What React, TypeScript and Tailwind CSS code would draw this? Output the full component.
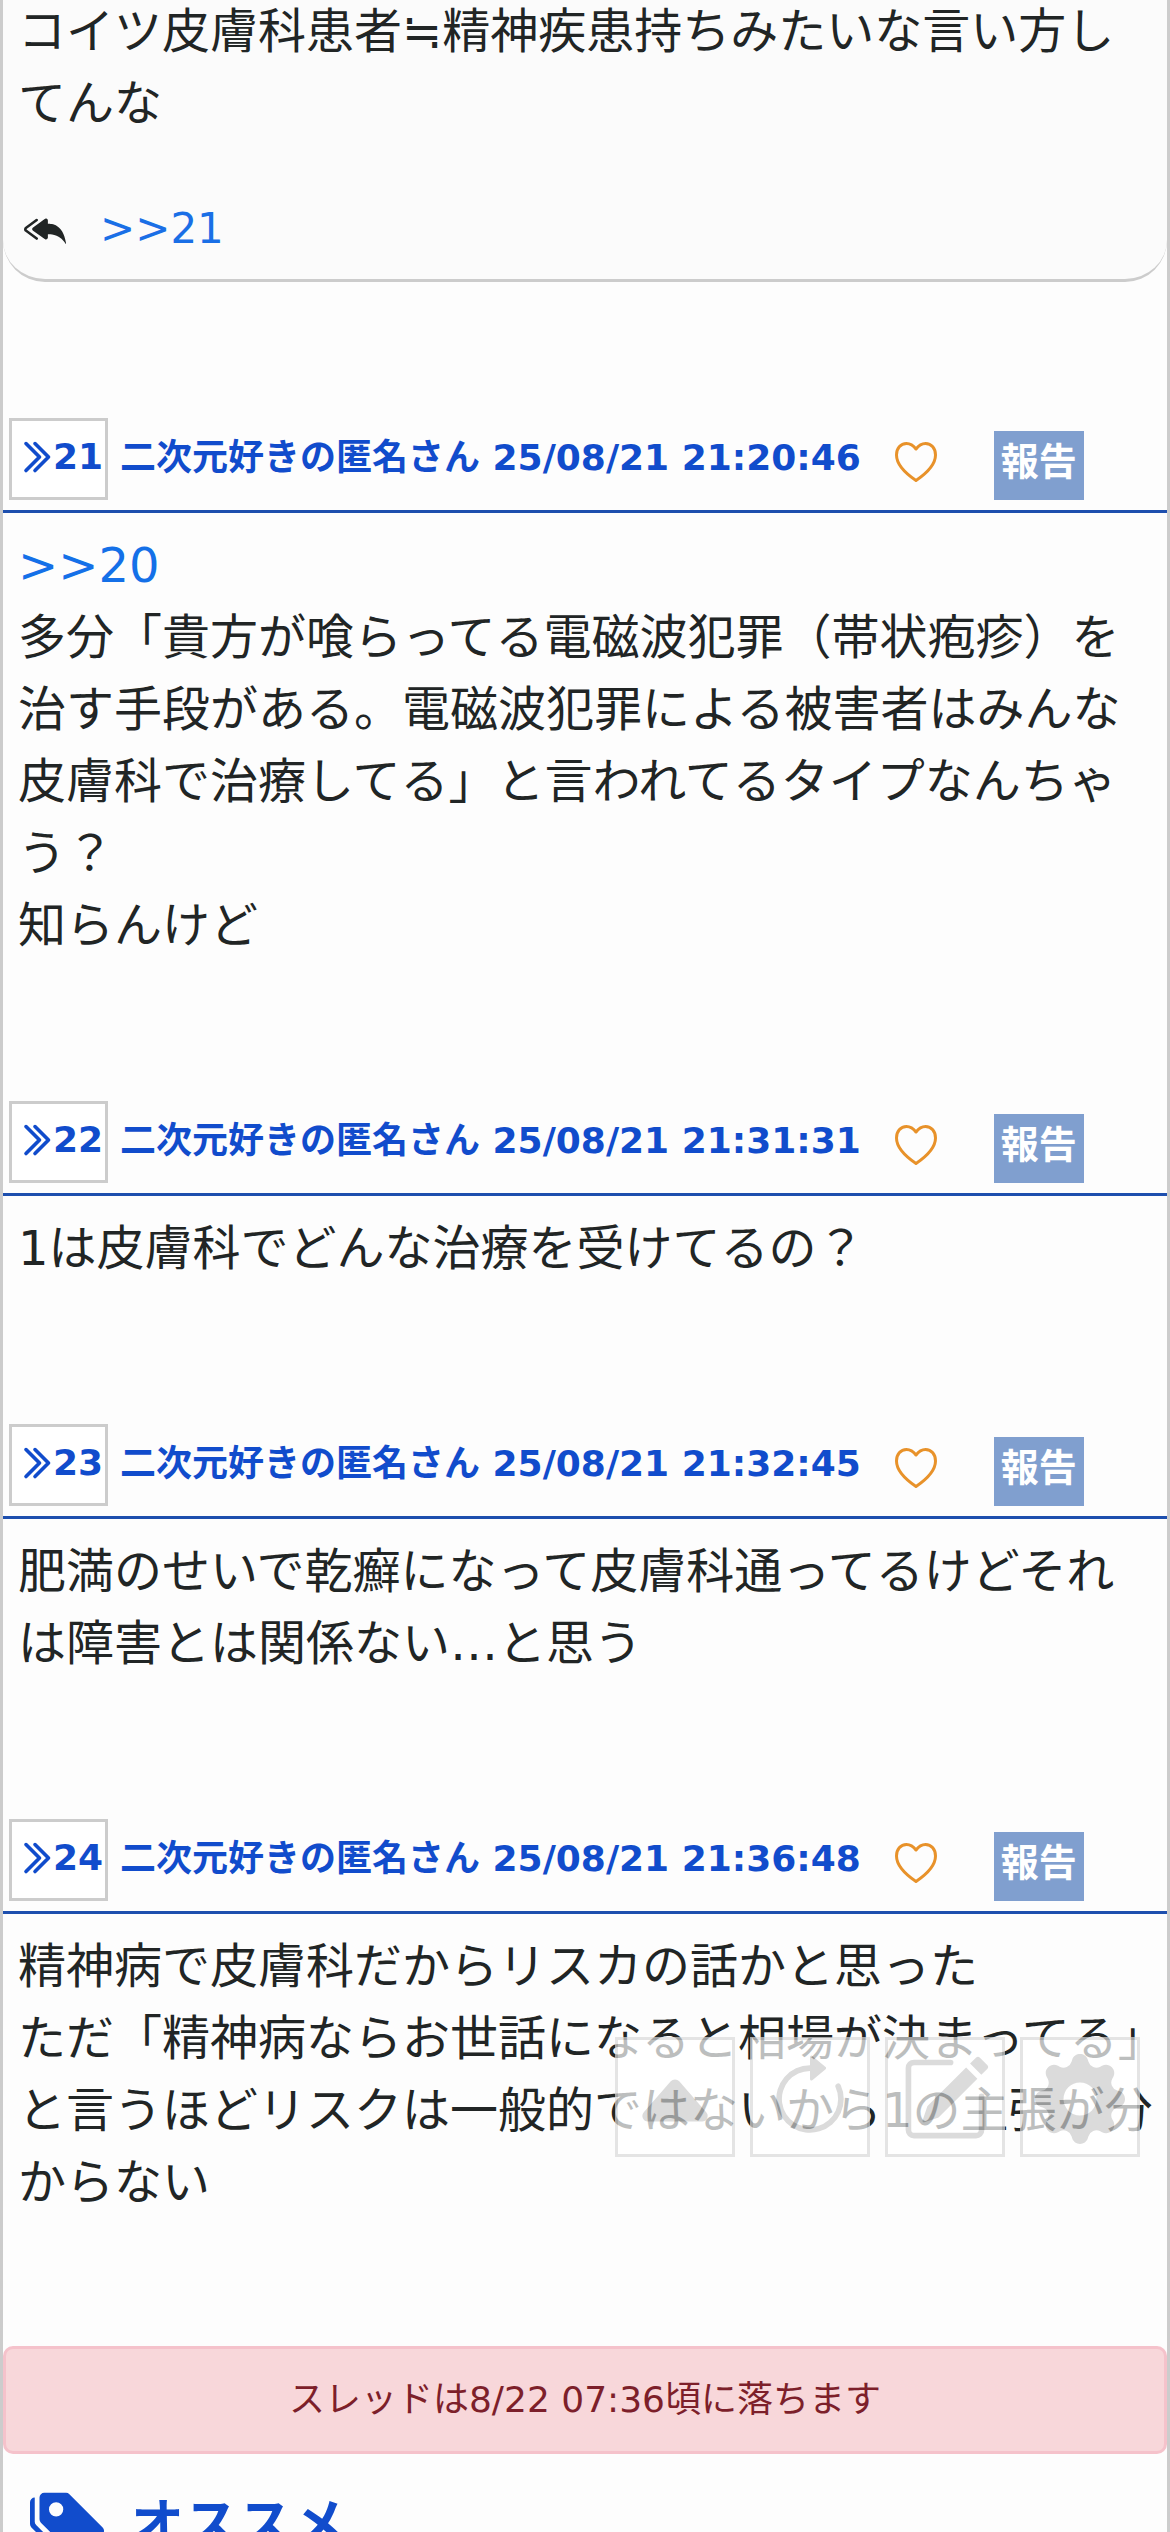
import type { IconType } from 'react-icons';
import {
  BsArrowClockwise,
  BsCaretUpFill,
  BsChevronDoubleRight,
  BsGearFill,
  BsPencilSquare,
  BsReplyAllFill,
  BsTagsFill,
} from 'react-icons/bs';

interface Post {
  id: number;
  date: string;
  replyTo?: number;
  lines: string[];
}

const posts: Post[] = [
  {
    id: 21,
    date: '25/08/21 21:20:46',
    replyTo: 20,
    lines: [
      '多分「貴方が喰らってる電磁波犯罪（帯状疱疹）を治す手段がある。電磁波犯罪による被害者はみんな皮膚科で治療してる」と言われてるタイプなんちゃう？',
      '知らんけど',
    ],
  },
  { id: 22, date: '25/08/21 21:31:31', lines: ['1は皮膚科でどんな治療を受けてるの？'] },
  { id: 23, date: '25/08/21 21:32:45', lines: ['肥満のせいで乾癬になって皮膚科通ってるけどそれは障害とは関係ない…と思う'] },
  {
    id: 24,
    date: '25/08/21 21:36:48',
    lines: ['精神病で皮膚科だからリスカの話かと思った', 'ただ「精神病ならお世話になると相場が決まってる」と言うほどリスクは一般的ではないから1の主張が分からない'],
  },
];

const tools: { label: string; icon: IconType }[] = [
  { label: '上へ', icon: BsCaretUpFill },
  { label: '更新', icon: BsArrowClockwise },
  { label: '書き込む', icon: BsPencilSquare },
  { label: '設定', icon: BsGearFill },
];

function HeartIcon() {
  return (
    <svg width="42" height="40" viewBox="0 0 42 40" fill="none" stroke="#e8922a" strokeWidth="3" strokeLinejoin="round">
      <path d="M21 7C18 3 15 1.500 11.500 1.500C5.500 1.500 1.500 6.500 1.500 13C1.500 23 10 31 21 38.500C32 31 40.500 23 40.500 13C40.500 6.500 36.500 1.500 30.500 1.500C27 1.500 24 3 21 7Z" />
    </svg>
  );
}

function PostItem({ post }: { post: Post }) {
  return (
    <article>
      <header className="flex items-end border-b-3 border-[#1e4fae] pb-[10px] pl-[6px] text-4xl leading-[54px] font-bold text-[#114ccc]">
        <button className="flex h-[82px] w-[99px] shrink-0 items-center border-3 border-[#ccc] bg-white pb-1 pl-[5px]">
          <BsChevronDoubleRight size={36} className="shrink-0 stroke-[0.6]" />
          {post.id}
        </button>
        <span className="mb-[15px] ml-3 whitespace-nowrap">二次元好きの匿名さん {post.date}</span>
        <button aria-label="いいね" className="mb-[18px] ml-[34px] shrink-0">
          <HeartIcon />
        </button>
        <button className="ml-[57px] h-[69px] w-[90px] shrink-0 bg-[#809fcf] pb-2 text-center text-[38px] text-white">報告</button>
      </header>
      <div className="pt-4 pr-3 pb-32 pl-[15px]">
        {post.replyTo && (
          <a href={`#${post.replyTo}`} className="text-[#1470e8]">
            &gt;&gt;{post.replyTo}
          </a>
        )}
        {post.lines.map((line) => (
          <p key={line}>{line}</p>
        ))}
      </div>
    </article>
  );
}

export default function App() {
  return (
    <div className="relative h-screen overflow-hidden border-x-3 border-[#ccc] bg-[#fdfdfd] font-['DejaVu_Sans','Noto_Sans_CJK_JP',sans-serif] text-5xl leading-[72px] text-[#212525]">
      <section className="mb-[136px] rounded-b-[42px] border-b-3 border-[#ccc] bg-[#fbfbfb] px-[15px] pb-[14px]">
        <p className="-mt-[5px]">コイツ皮膚科患者≒精神疾患持ちみたいな言い方してんな</p>
        <div className="mt-[54px] flex items-center gap-[34px] pl-[6px] text-[42px]">
          <BsReplyAllFill size={42} />
          <a href="#21" className="text-[#1a6fe6]">
            &gt;&gt;21
          </a>
        </div>
      </section>

      <div className="flex flex-col gap-3">
        {posts.map((post) => (
          <PostItem key={post.id} post={post} />
        ))}
      </div>

      <div role="alert" className="rounded-[10px] border-3 border-[#f5c2cb] bg-[#f8d7da] py-6 text-center text-4xl leading-[54px] text-[#7d1f2a]">
        スレッドは8/22 07:36頃に落ちます
      </div>

      <h2 className="mt-[34px] flex items-center gap-6 pl-[27px] text-[54px] font-bold text-[#114ccc]">
        <BsTagsFill size={76} />
        オススメ
      </h2>

      <nav className="fixed right-[30px] bottom-[375px] flex gap-[15px] opacity-70">
        {tools.map(({ label, icon: Icon }) => (
          <button
            key={label}
            aria-label={label}
            className="flex size-[120px] items-center justify-center border-3 border-[#d9d9d9] bg-white pt-1 text-[#ccc]"
          >
            <Icon size={90} />
          </button>
        ))}
      </nav>
    </div>
  );
}
